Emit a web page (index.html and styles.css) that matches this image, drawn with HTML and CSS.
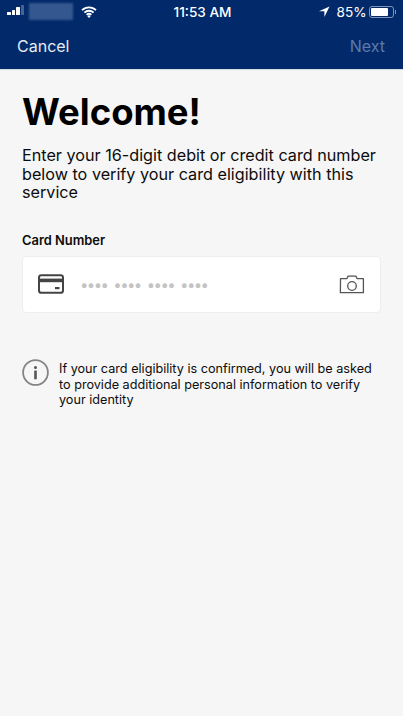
FILE: index.html
```html
<!DOCTYPE html>
<html lang="en">
<head>
<meta charset="utf-8">
<title>Welcome</title>
<link rel="stylesheet" href="styles.css">
</head>
<body>
<header class="header">
  <div class="status">
    <div class="status-left">
      <span class="signal"><i class="on b1"></i><i class="on b2"></i><i class="on b3"></i><i class="b4"></i></span>
      <span class="carrier"></span>
      <svg class="wifi" width="16" height="12" viewBox="0 0 16 12"><path d="M1 4.2a10 10 0 0 1 14 0M3.4 6.6a6.6 6.6 0 0 1 9.2 0M5.7 8.8a3.3 3.3 0 0 1 4.6 0" fill="none" stroke="#fff" stroke-width="1.8"/><path d="M8 12 6.4 10.2a2.2 2.2 0 0 1 3.2 0z" fill="#fff"/></svg>
    </div>
    <div class="time">11:53 AM</div>
    <div class="status-right">
      <svg class="loc" width="11" height="11" viewBox="0 0 11 11"><path d="M10.5.5 0 5.3h5.4V11z" fill="#fff"/></svg>
      <span class="pct">85%</span>
      <span class="battery"><span class="level"></span></span><span class="nub"></span>
    </div>
  </div>
  <nav class="nav">
    <span class="cancel">Cancel</span>
    <span class="next">Next</span>
  </nav>
</header>
<main class="main">
  <h1 class="title">Welcome!</h1>
  <p class="intro">Enter your 16-digit debit or credit card number below to verify your card eligibility with this service</p>
  <label class="label">Card Number</label>
  <div class="field">
    <svg class="card-icon" width="26" height="20" viewBox="0 0 26 20"><rect x="1" y="1.2" width="24" height="17.6" rx="2.4" fill="none" stroke="#444" stroke-width="2"/><rect x="1" y="4.6" width="24" height="3.6" fill="#444"/><rect x="17" y="13" width="4.5" height="2.2" fill="#444"/></svg>
    <span class="dots"><span>••••</span><span>••••</span><span>••••</span><span>••••</span></span>
    <svg class="cam-icon" width="26" height="20" viewBox="0 0 26 20"><path d="M1.5 3.7h6.3l1.3-2.6h7.8l1.3 2.6h6.2v14h-23z" fill="none" stroke="#555" stroke-width="1.3" stroke-linejoin="round"/><circle cx="13" cy="11" r="4.3" fill="none" stroke="#555" stroke-width="1.3"/></svg>
  </div>
  <div class="notice">
    <svg class="info" width="27" height="27" viewBox="0 0 27 27"><circle cx="13.5" cy="13.5" r="12.4" fill="none" stroke="#858585" stroke-width="1.8"/><circle cx="13.5" cy="8.4" r="1.5" fill="#555"/><rect x="12.2" y="11.6" width="2.6" height="8.6" rx=".5" fill="#555"/></svg>
    <p class="notice-text">If your card eligibility is confirmed, you will be asked to provide additional personal information to verify your identity</p>
  </div>
</main>
</body>
</html>
```
FILE: styles.css
```css
* { box-sizing: border-box; }
html, body { margin: 0; height: 100%; }
body {
  background: #f6f6f6;
  font-family: Inter, "Liberation Sans", sans-serif;
  color: #0c0c0c;
  overflow: hidden;
}
.header { background: #022a6a; height: 69px; box-shadow: 0 1px 1px #d5dde6; color: #fff; }
.status {
  height: 23px;
  padding: 0 5px;
  display: grid;
  grid-template-columns: 1fr auto 1fr;
  align-items: center;
  font-size: 13.6px;
  font-weight: 500;
}
.status-left { display: flex; align-items: center; }
.signal { display: flex; align-items: flex-end; gap: 1px; height: 10px; margin: -3px 0 0 2px; }
.signal i { width: 3.5px; background: #47648f; display: block; border-radius: .5px; height: 10px; }
.signal .on { background: #fff; }
.signal .b1 { height: 3px; }
.signal .b2 { height: 5px; }
.signal .b3 { height: 8px; }
.carrier { width: 44px; height: 17px; background: #34578f; margin-left: 5px; filter: blur(1px); }
.wifi { margin-left: 8px; }
.time { text-align: center; padding-left: 2px; }
.status-right { display: flex; align-items: center; justify-content: flex-end; }
.pct { margin-left: 6px; font-weight: 400; }
.battery { width: 25px; height: 12px; border: 1px solid #7f93b4; border-radius: 3px; padding: 1px; margin-left: 2px; display: block; }
.level { display: block; height: 100%; width: 85%; background: #fff; border-radius: 1px; }
.nub { width: 1.5px; height: 4px; background: #7f93b4; margin-left: 1px; margin-right: 2px; }
.nav {
  height: 46px;
  padding: 0 18px 0 17px;
  display: flex;
  justify-content: space-between;
  align-items: center;
  font-size: 16px;
}
.cancel { color: #e4eaf3; }
.next { color: #5c7aa8; }
.main { padding: 22px 22px 0; }
.title { margin: 0; font-size: 36.5px; line-height: 42px; font-weight: 700; color: #000; }
.intro { margin: 13px 0 0; font-size: 16.2px; line-height: 18.7px; width: 360px; }
.label { display: block; margin-top: 31px; font-size: 12.9px; line-height: 16px; font-weight: 600; }
.field {
  margin-top: 7px;
  width: 359px;
  height: 57px;
  background: #fff;
  border: 1px solid #eeeeee;
  border-radius: 4px;
  display: flex;
  align-items: center;
  padding: 0 15px;
}
.card-icon { margin-top: -2px; }
.dots { margin-left: 16px; display: flex; gap: 6px; color: #c4c4c4; font-size: 15px; line-height: 16px; letter-spacing: -1.6px; flex: 1; }
.notice { margin-top: 46px; display: flex; align-items: flex-start; }
.info { flex: none; }
.notice-text { margin: 2px 0 0 10px; font-size: 12.65px; line-height: 15.6px; width: 322px; }
```
